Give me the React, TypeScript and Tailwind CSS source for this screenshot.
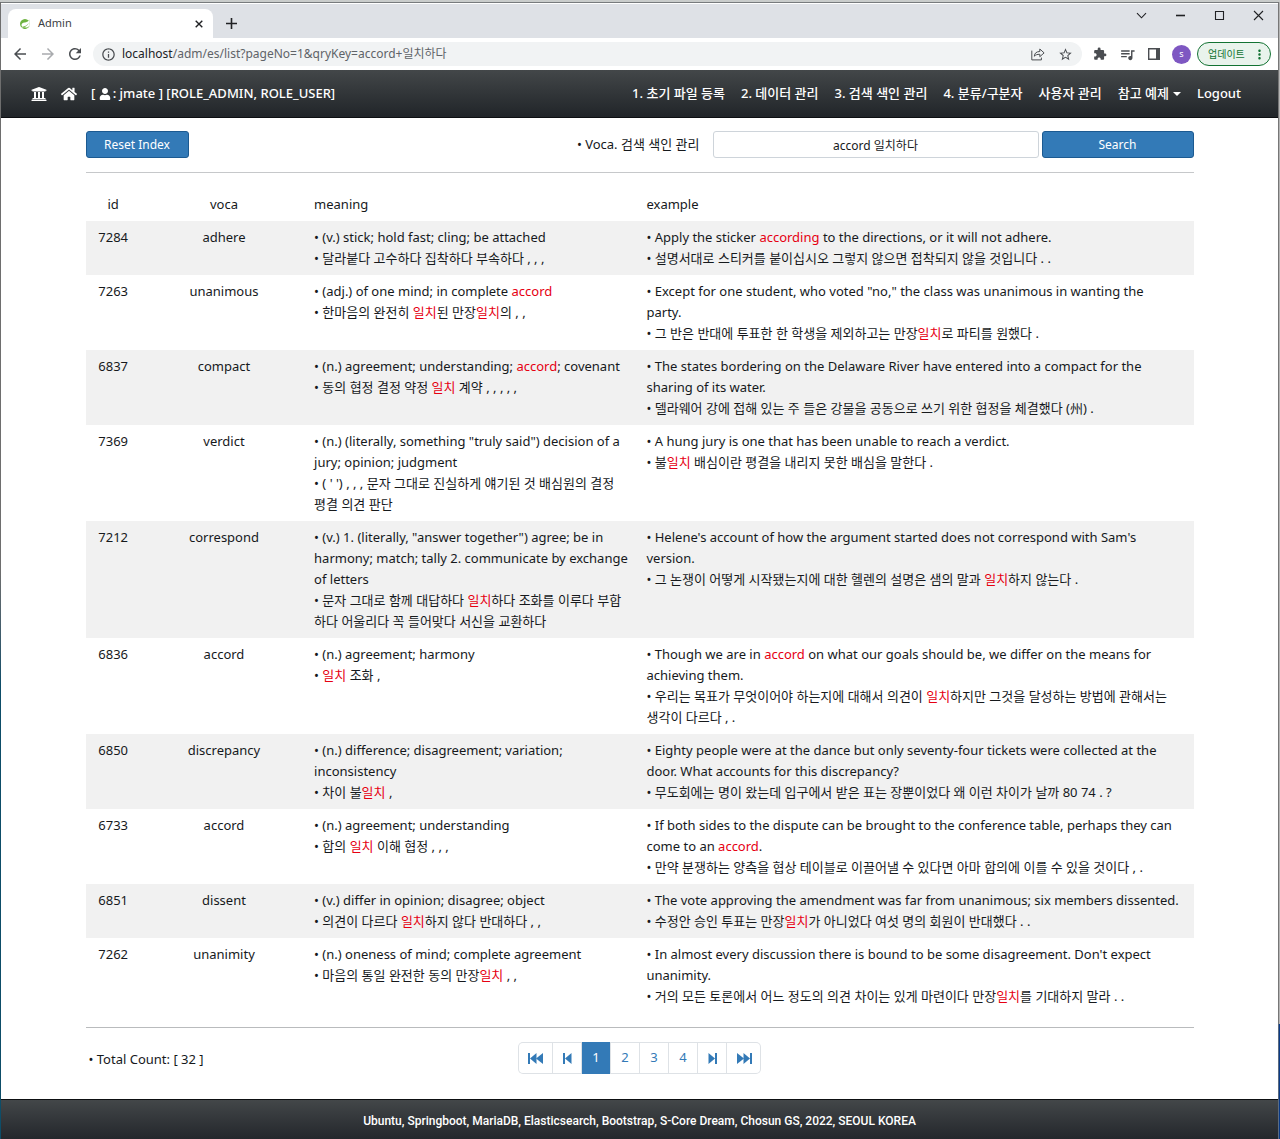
import type { ReactNode } from "react";
import {
  MdArrowBack,
  MdArrowForward,
  MdRefresh,
  MdInfoOutline,
  MdStarBorder,
  MdExtension,
  MdQueueMusic,
  MdMoreVert,
} from "react-icons/md";
import { FaUniversity, FaHome, FaUser } from "react-icons/fa";
import { SiSpring } from "react-icons/si";

type Entry = { id: number; voca: string; meaning: string[]; example: string[] };

// Text between asterisks is a search hit; "\n" is a line break inside an item.
const entries: Entry[] = [
  {
    id: 7284,
    voca: "adhere",
    meaning: ["(v.) stick; hold fast; cling; be attached", "달라붙다 고수하다 집착하다 부속하다 , , ,"],
    example: [
      "Apply the sticker *according* to the directions, or it will not adhere.",
      "설명서대로 스티커를 붙이십시오 그렇지 않으면 접착되지 않을 것입니다 . .",
    ],
  },
  {
    id: 7263,
    voca: "unanimous",
    meaning: ["(adj.) of one mind; in complete *accord*", "한마음의 완전히 *일치*된 만장*일치*의 , ,"],
    example: [
      'Except for one student, who voted "no," the class was unanimous in wanting the\nparty.',
      "그 반은 반대에 투표한 한 학생을 제외하고는 만장*일치*로 파티를 원했다 .",
    ],
  },
  {
    id: 6837,
    voca: "compact",
    meaning: ["(n.) agreement; understanding; *accord*; covenant", "동의 협정 결정 약정 *일치* 계약 , , , , ,"],
    example: [
      "The states bordering on the Delaware River have entered into a compact for the\nsharing of its water.",
      "델라웨어 강에 접해 있는 주 들은 강물을 공동으로 쓰기 위한 협정을 체결했다 (州) .",
    ],
  },
  {
    id: 7369,
    voca: "verdict",
    meaning: [
      '(n.) (literally, something "truly said") decision of a\njury; opinion; judgment',
      "( ' ') , , , 문자 그대로 진실하게 얘기된 것 배심원의 결정\n평결 의견 판단",
    ],
    example: [
      "A hung jury is one that has been unable to reach a verdict.",
      "불*일치* 배심이란 평결을 내리지 못한 배심을 말한다 .",
    ],
  },
  {
    id: 7212,
    voca: "correspond",
    meaning: [
      '(v.) 1. (literally, "answer together") agree; be in\nharmony; match; tally 2. communicate by exchange\nof letters',
      "문자 그대로 함께 대답하다 *일치*하다 조화를 이루다 부합\n하다 어울리다 꼭 들어맞다 서신을 교환하다",
    ],
    example: [
      "Helene's account of how the argument started does not correspond with Sam's\nversion.",
      "그 논쟁이 어떻게 시작됐는지에 대한 헬렌의 설명은 샘의 말과 *일치*하지 않는다 .",
    ],
  },
  {
    id: 6836,
    voca: "accord",
    meaning: ["(n.) agreement; harmony", "*일치* 조화 ,"],
    example: [
      "Though we are in *accord* on what our goals should be, we differ on the means for\nachieving them.",
      "우리는 목표가 무엇이어야 하는지에 대해서 의견이 *일치*하지만 그것을 달성하는 방법에 관해서는\n생각이 다르다 , .",
    ],
  },
  {
    id: 6850,
    voca: "discrepancy",
    meaning: ["(n.) difference; disagreement; variation;\ninconsistency", "차이 불*일치* ,"],
    example: [
      "Eighty people were at the dance but only seventy-four tickets were collected at the\ndoor. What accounts for this discrepancy?",
      "무도회에는 명이 왔는데 입구에서 받은 표는 장뿐이었다 왜 이런 차이가 날까 80 74 . ?",
    ],
  },
  {
    id: 6733,
    voca: "accord",
    meaning: ["(n.) agreement; understanding", "합의 *일치* 이해 협정 , , ,"],
    example: [
      "If both sides to the dispute can be brought to the conference table, perhaps they can\ncome to an *accord*.",
      "만약 분쟁하는 양측을 협상 테이블로 이끌어낼 수 있다면 아마 합의에 이를 수 있을 것이다 , .",
    ],
  },
  {
    id: 6851,
    voca: "dissent",
    meaning: ["(v.) differ in opinion; disagree; object", "의견이 다르다 *일치*하지 않다 반대하다 , ,"],
    example: [
      "The vote approving the amendment was far from unanimous; six members dissented.",
      "수정안 승인 투표는 만장*일치*가 아니었다 여섯 명의 회원이 반대했다 . .",
    ],
  },
  {
    id: 7262,
    voca: "unanimity",
    meaning: ["(n.) oneness of mind; complete agreement", "마음의 통일 완전한 동의 만장*일치* , ,"],
    example: [
      "In almost every discussion there is bound to be some disagreement. Don't expect\nunanimity.",
      "거의 모든 토론에서 어느 정도의 의견 차이는 있게 마련이다 만장*일치*를 기대하지 말라 . .",
    ],
  },
];

const navLinks = ["1. 초기 파일 등록", "2. 데이터 관리", "3. 검색 색인 관리", "4. 분류/구분자", "사용자 관리"];

function Marked({ text }: { text: string }) {
  return (
    <>
      {text.split("*").map((part, i) =>
        i % 2 === 1 ? (
          <em key={i} className="text-[#e60012] not-italic">
            {part}
          </em>
        ) : (
          part
        ),
      )}
    </>
  );
}

function Items({ items }: { items: string[] }) {
  return (
    <>
      {items.map((item) =>
        `• ${item}`.split("\n").map((line) => (
          <p key={line}>
            <Marked text={line} />
          </p>
        )),
      )}
    </>
  );
}

function WinButton({ label, children }: { label: string; children: ReactNode }) {
  return (
    <button type="button" aria-label={label} className="flex h-[22px] w-[39px] items-center justify-center">
      <svg width="11" height="11" viewBox="0 0 11 11" fill="none" stroke="#202124" strokeWidth="1.1">
        {children}
      </svg>
    </button>
  );
}

function TabStrip() {
  return (
    <div className="flex h-[34px] items-start justify-between bg-[#dee1e6] pl-[7px]">
      <div className="flex self-stretch">
        <div className="mt-[5px] flex w-[205px] items-center rounded-t-lg bg-white px-[12px] text-[11px] text-[#3c4043]">
          <SiSpring className="mr-2 size-[10px] text-[#6db33f]" aria-hidden />
          <span className="grow">Admin</span>
          <button type="button" aria-label="Close tab" className="-mr-[2px]">
            <svg width="8" height="8" viewBox="0 0 8 8" stroke="#202124" strokeWidth="1.4">
              <path d="M.7.7l6.6 6.6M7.3.7L.7 7.3" />
            </svg>
          </button>
        </div>
        <button type="button" aria-label="New tab" className="mt-[5px] ml-[13px]">
          <svg width="11" height="11" viewBox="0 0 11 11" stroke="#202124" strokeWidth="1.6">
            <path d="M5.5 0v11M0 5.5h11" />
          </svg>
        </button>
      </div>
      <div className="flex">
        <WinButton label="Search tabs">
          <path d="M1 3.2l4.5 4.6L10 3.2" />
        </WinButton>
        <WinButton label="Minimize">
          <path d="M1 5.5h9" strokeWidth="1.6" />
        </WinButton>
        <WinButton label="Maximize">
          <path d="M1.5 1.5h8v8h-8z" />
        </WinButton>
        <WinButton label="Close">
          <path d="M1 1l9 9M10 1l-9 9" />
        </WinButton>
      </div>
    </div>
  );
}

function Toolbar() {
  return (
    <div className="flex h-8 items-center bg-white pr-[7px] pl-[10px] text-[#4a4d51]">
      <button type="button" aria-label="Back" className="mr-[10px]">
        <MdArrowBack className="size-[18px]" />
      </button>
      <button type="button" aria-label="Forward" className="mr-[9px] text-[#a9abae]">
        <MdArrowForward className="size-[18px]" />
      </button>
      <button type="button" aria-label="Reload" className="mr-[9px]">
        <MdRefresh className="size-[18px]" />
      </button>
      <div className="flex h-6 grow items-center rounded-full bg-[#f1f3f4] pr-[9px] pl-2">
        <MdInfoOutline className="mr-[6px] size-[15px]" aria-hidden />
        <span className="grow text-[12px] text-[#5f6368]">
          <span className="text-[#202124]">localhost</span>
          /adm/es/list?pageNo=1&amp;qryKey=accord+일치하다
        </span>
        <button type="button" aria-label="Share" className="mr-[13px]">
          <svg width="14" height="13" viewBox="0 0 14 13" fill="none" stroke="currentColor" strokeWidth="1">
            <path d="M.8 2.6v9.3h9.6V9.6" />
            <path d="M3.3 8.2c.3-3 2-4.6 5.5-4.7V1l4.3 3.9-4.3 3.8V6.3c-2.6 0-4.2.5-5.5 1.9z" />
          </svg>
        </button>
        <button type="button" aria-label="Bookmark">
          <MdStarBorder className="size-[15px]" />
        </button>
      </div>
      <div className="flex items-center gap-[12px] pl-[11px]">
        <button type="button" aria-label="Extensions">
          <MdExtension className="size-[14px]" />
        </button>
        <button type="button" aria-label="Media controls">
          <MdQueueMusic className="size-[17px]" />
        </button>
        <button type="button" aria-label="Side panel">
          <svg width="12" height="12" viewBox="0 0 12 12">
            <path d="M.7.7h10.6v10.6H.7z" fill="none" stroke="currentColor" strokeWidth="1.4" />
            <path d="M8 0h4v12H8z" fill="currentColor" />
          </svg>
        </button>
      </div>
      <button
        type="button"
        aria-label="Profile"
        className="ml-[12px] flex size-[19px] items-center justify-center rounded-full bg-[#7e57c2] text-[9px] text-white"
      >
        s
      </button>
      <button
        type="button"
        className="ml-[6px] flex h-6 w-[74px] items-center justify-between rounded-full border border-[#137333] bg-[#e9f3ec] pr-[3px] pl-[10px] text-[10px] text-[#137333]"
      >
        업데이트
        <MdMoreVert className="size-[15px]" aria-hidden />
      </button>
    </div>
  );
}

function Navbar() {
  return (
    <nav className="flex h-12 items-center justify-between border-b border-[#0d0f12] bg-gradient-to-b from-[#434749] to-[#212529] pt-px pr-[37px] pl-[30px] text-[13px] font-medium text-white">
      <div className="flex items-center gap-[14px]">
        <a href="#bank" aria-label="Management">
          <FaUniversity className="size-4" />
        </a>
        <a href="#home" aria-label="Home">
          <FaHome className="size-4" />
        </a>
        <span className="flex items-center">
          [&nbsp;
          <FaUser className="mr-[2px] size-3" aria-hidden />
          :&nbsp;jmate ]&nbsp;[ROLE_ADMIN, ROLE_USER]
        </span>
      </div>
      <div className="flex items-center gap-4">
        {navLinks.map((l) => (
          <a key={l} href="#menu">
            {l}
          </a>
        ))}
        <button type="button" className="flex items-center gap-1">
          참고 예제
          <svg width="8" height="4" viewBox="0 0 8 4" fill="currentColor" aria-hidden>
            <path d="M0 0h8L4 4z" />
          </svg>
        </button>
        <a href="#logout">Logout</a>
      </div>
    </nav>
  );
}

function SkipIcon({ double, flip }: { double?: boolean; flip?: boolean }) {
  const w = double ? 15 : 9;
  return (
    <svg
      width={w}
      height="11"
      viewBox={`0 0 ${w} 11`}
      fill="currentColor"
      className={flip ? "rotate-180" : ""}
      aria-hidden
    >
      <path d="M0 0h2v11H0zM8.5 0v11L2 5.5z" />
      {double && <path d="M15 0v11L8 5.500z" />}
    </svg>
  );
}

function PageButton({
  label,
  wide,
  active,
  children,
}: {
  label?: string;
  wide?: boolean;
  active?: boolean;
  children: ReactNode;
}) {
  return (
    <li className="flex">
      <button
        type="button"
        aria-label={label}
        aria-current={active ? "page" : undefined}
        className={`flex h-8 items-center justify-center ${wide ? "w-[34px]" : "w-[28px]"} ${
          active ? "bg-[#337ab7] text-white" : "text-[#337ab7]"
        }`}
      >
        {children}
      </button>
    </li>
  );
}

function Pagination() {
  return (
    <nav aria-label="Pages">
      <ul className="flex divide-x divide-[#dee2e6] overflow-hidden rounded-[5px] text-[13px] shadow-[inset_0_0_0_1px_#dee2e6]">
        <PageButton label="First page" wide>
          <SkipIcon double />
        </PageButton>
        <PageButton label="Previous page">
          <SkipIcon />
        </PageButton>
        <PageButton active>1</PageButton>
        <PageButton>2</PageButton>
        <PageButton>3</PageButton>
        <PageButton>4</PageButton>
        <PageButton label="Next page">
          <SkipIcon flip />
        </PageButton>
        <PageButton label="Last page" wide>
          <SkipIcon double flip />
        </PageButton>
      </ul>
    </nav>
  );
}

const blueButton = "h-[27px] rounded-[3px] border border-[#1c5a91] bg-[#337ab7] text-[12px] text-white";

function Content() {
  return (
    <main className="mx-auto w-full max-w-[1108px] pt-[13px] pb-[24px]">
      <div className="flex items-center justify-between">
        <button type="button" className={`${blueButton} w-[103px]`}>
          Reset Index
        </button>
        <form className="flex items-center" onSubmit={(e) => e.preventDefault()}>
          <label htmlFor="qryKey" className="mr-[13px]">
            • Voca. 검색 색인 관리
          </label>
          <input
            id="qryKey"
            type="text"
            defaultValue="accord 일치하다"
            className="mr-[3px] h-[27px] w-[326px] rounded-[3px] border border-[#ced4da] text-center text-[12px]"
          />
          <button type="submit" className={`${blueButton} w-[152px]`}>
            Search
          </button>
        </form>
      </div>
      <hr className="mt-[14px] border-[#c6c8ca]" />
      <table className="mt-[15px] w-full table-fixed leading-[21px]">
        <colgroup>
          <col className="w-[5%]" />
          <col className="w-[15%]" />
          <col className="w-[30%]" />
          <col className="w-[50%]" />
        </colgroup>
        <thead>
          <tr>
            <th className="py-[6px] font-normal">id</th>
            <th className="py-[6px] font-normal">voca</th>
            <th className="px-[7px] py-[6px] text-left font-normal">meaning</th>
            <th className="px-[7px] py-[6px] text-left font-normal">example</th>
          </tr>
        </thead>
        <tbody>
          {entries.map((e) => (
            <tr key={e.id} className="align-top odd:bg-[#f1f1f1]">
              <td className="py-[6px] text-center">{e.id}</td>
              <td className="py-[6px] text-center">{e.voca}</td>
              <td className="py-[6px] pl-[7px]">
                <Items items={e.meaning} />
              </td>
              <td className="py-[6px] pl-[7px]">
                <Items items={e.example} />
              </td>
            </tr>
          ))}
        </tbody>
      </table>
      <hr className="mt-[14px] border-[#b9bbbd]" />
      <div className="mt-[14px] grid grid-cols-[1fr_auto_1fr] items-center">
        <span className="pt-[3px] pl-[3px]">• Total Count: [ 32 ]</span>
        <Pagination />
      </div>
    </main>
  );
}

export default function App() {
  return (
    <div className="flex min-h-screen bg-[#c9cccb] pt-[2px] font-['Noto_Sans','Noto_Sans_CJK_KR',sans-serif] text-[13px] text-[#16191c]">
      <div className="w-px bg-gradient-to-b from-[#6e6e6e] from-50% to-[#0d4d68] to-60%" />
      <div className="flex min-w-0 grow flex-col border-t border-[#777b7d] bg-white">
        <div className="h-px bg-white" />
        <TabStrip />
        <Toolbar />
        <Navbar />
        <Content />
        <footer className="mt-auto h-10 border-t border-[#0d0f12] bg-gradient-to-b from-[#434749] to-[#24272c] pt-[12px] text-center font-['Roboto',sans-serif] text-[12px] leading-[18px] font-medium text-white">
          Ubuntu, Springboot, MariaDB, Elasticsearch, Bootstrap, S-Core Dream, Chosun GS, 2022, SEOUL KOREA
        </footer>
      </div>
      <div className="flex w-[2px] flex-col">
        <div className="grow border-l border-[#777] bg-[#b5b5b5]" />
        <div className="h-[115px] border-l border-[#5b6b80] bg-[#0a3a86]" />
      </div>
    </div>
  );
}
